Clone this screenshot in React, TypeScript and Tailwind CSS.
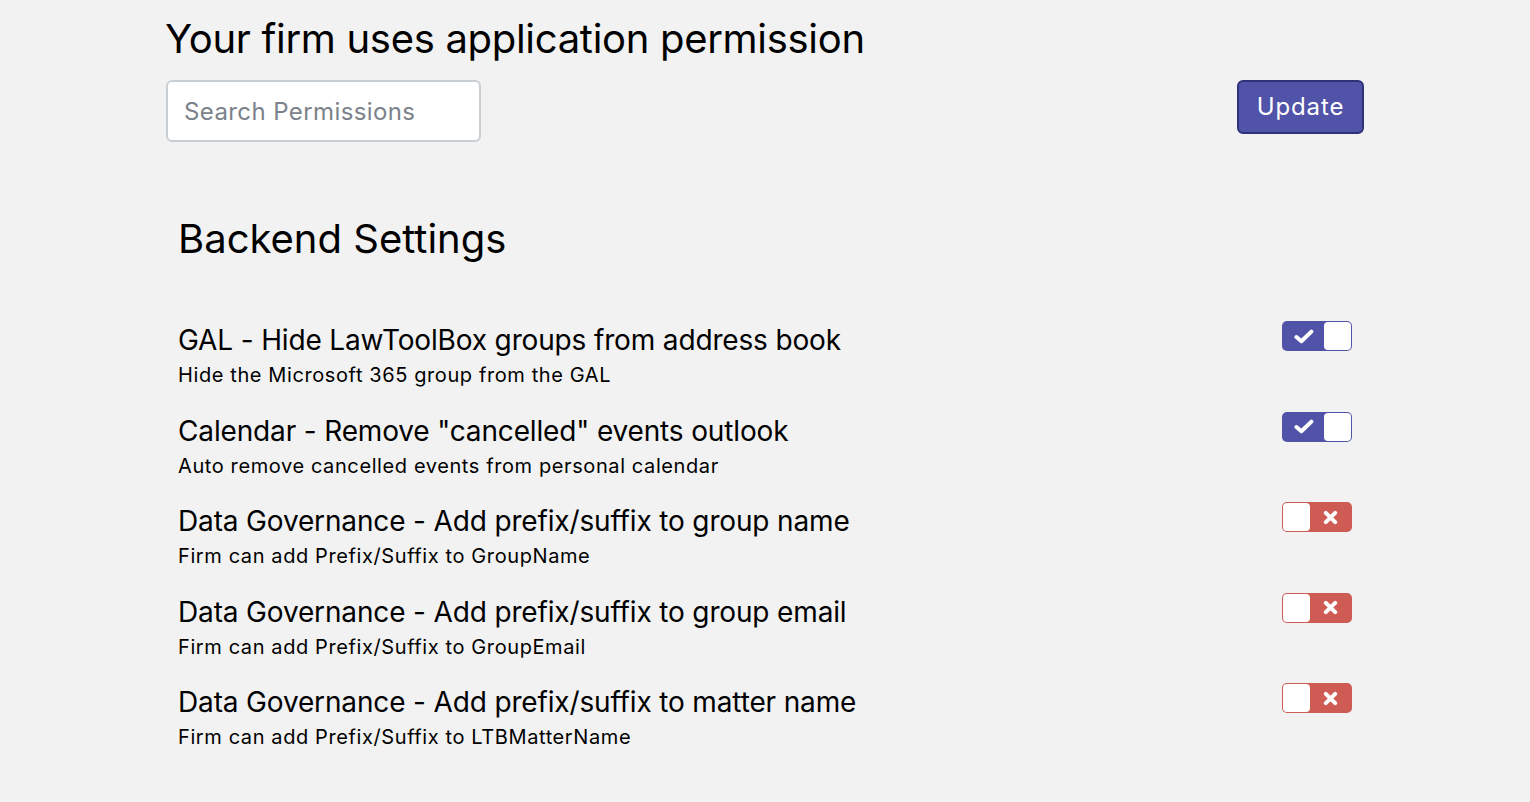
import React from "react";

type Item = { title: string; desc: string; on: boolean };

const items: Item[] = [
  { title: "GAL - Hide LawToolBox groups from address book", desc: "Hide the Microsoft 365 group from the GAL", on: true },
  { title: 'Calendar - Remove "cancelled" events outlook', desc: "Auto remove cancelled events from personal calendar", on: true },
  { title: "Data Governance - Add prefix/suffix to group name", desc: "Firm can add Prefix/Suffix to GroupName", on: false },
  { title: "Data Governance - Add prefix/suffix to group email", desc: "Firm can add Prefix/Suffix to GroupEmail", on: false },
  { title: "Data Governance - Add prefix/suffix to matter name", desc: "Firm can add Prefix/Suffix to LTBMatterName", on: false },
];

function Toggle({ on }: { on: boolean }) {
  if (on) {
    return (
      <div className="-mt-[2px] flex h-[30px] w-[70px] shrink-0 items-center rounded-[5px] bg-[#5053a8] p-[1px]">
        <div className="flex flex-1 items-center justify-center pl-[1px]">
          <svg width="20" height="15" viewBox="0 0 20 15">
            <path d="M2.4 8 L7.4 12.2 L17.4 2.6" fill="none" stroke="#fff" strokeWidth="4" strokeLinecap="round" strokeLinejoin="round" />
          </svg>
        </div>
        <div className="h-[28px] w-[27px] rounded-[4px] bg-white" />
      </div>
    );
  }
  return (
    <div className="-mt-[2px] flex h-[30px] w-[70px] shrink-0 items-center rounded-[5px] bg-[#cf5b55] p-[1px]">
      <div className="h-[28px] w-[27px] rounded-[4px] bg-white" />
      <div className="flex flex-1 items-center justify-center">
        <svg width="15" height="15" viewBox="0 0 15 15">
          <path d="M2.8 2.8 L12.2 12.2 M12.2 2.8 L2.8 12.2" fill="none" stroke="#fff" strokeWidth="4" strokeLinecap="round" />
        </svg>
      </div>
    </div>
  );
}

export default function App() {
  return (
    <div
      className="min-h-[802px] w-full bg-[#f2f2f2] text-black"
      style={{ fontFamily: "Inter, 'Noto Sans', sans-serif" }}
    >
      <div className="mx-auto w-[1200px] pt-[15px]">
        <h1 className="text-[40px] leading-[48px] font-normal tracking-[-0.3px]">
          Your firm uses application permission
        </h1>
        <div className="mt-[17px] flex items-start justify-between">
          <input
            type="text"
            placeholder="Search Permissions"
            className="ml-[1px] h-[62px] w-[315px] rounded-[6px] border-[2px] border-[#c9ced3] bg-white px-[16px] text-[24px] tracking-[0.4px] text-black placeholder:text-[#7b828a] outline-none"
          />
          <button className="mr-[1px] h-[54px] w-[127px] rounded-[6px] border-[2px] border-[#2f3179] bg-[#5053a8] text-[24px] tracking-[0.9px] text-white">
            Update
          </button>
        </div>
        <div className="px-[13px]">
          <h2 className="mt-[73px] text-[40px] leading-[48px] font-normal tracking-[0px]">
            Backend Settings
          </h2>
          <div className="mt-[60px] flex flex-col gap-[26.5px]">
            {items.map((it) => (
              <div key={it.title} className="flex items-start justify-between">
                <div>
                  <div className="text-[28px] leading-[34px] tracking-[-0.15px]">{it.title}</div>
                  <div className="mt-[6px] text-[20px] leading-[24px] tracking-[0.6px]">{it.desc}</div>
                </div>
                <Toggle on={it.on} />
              </div>
            ))}
          </div>
        </div>
      </div>
    </div>
  );
}
